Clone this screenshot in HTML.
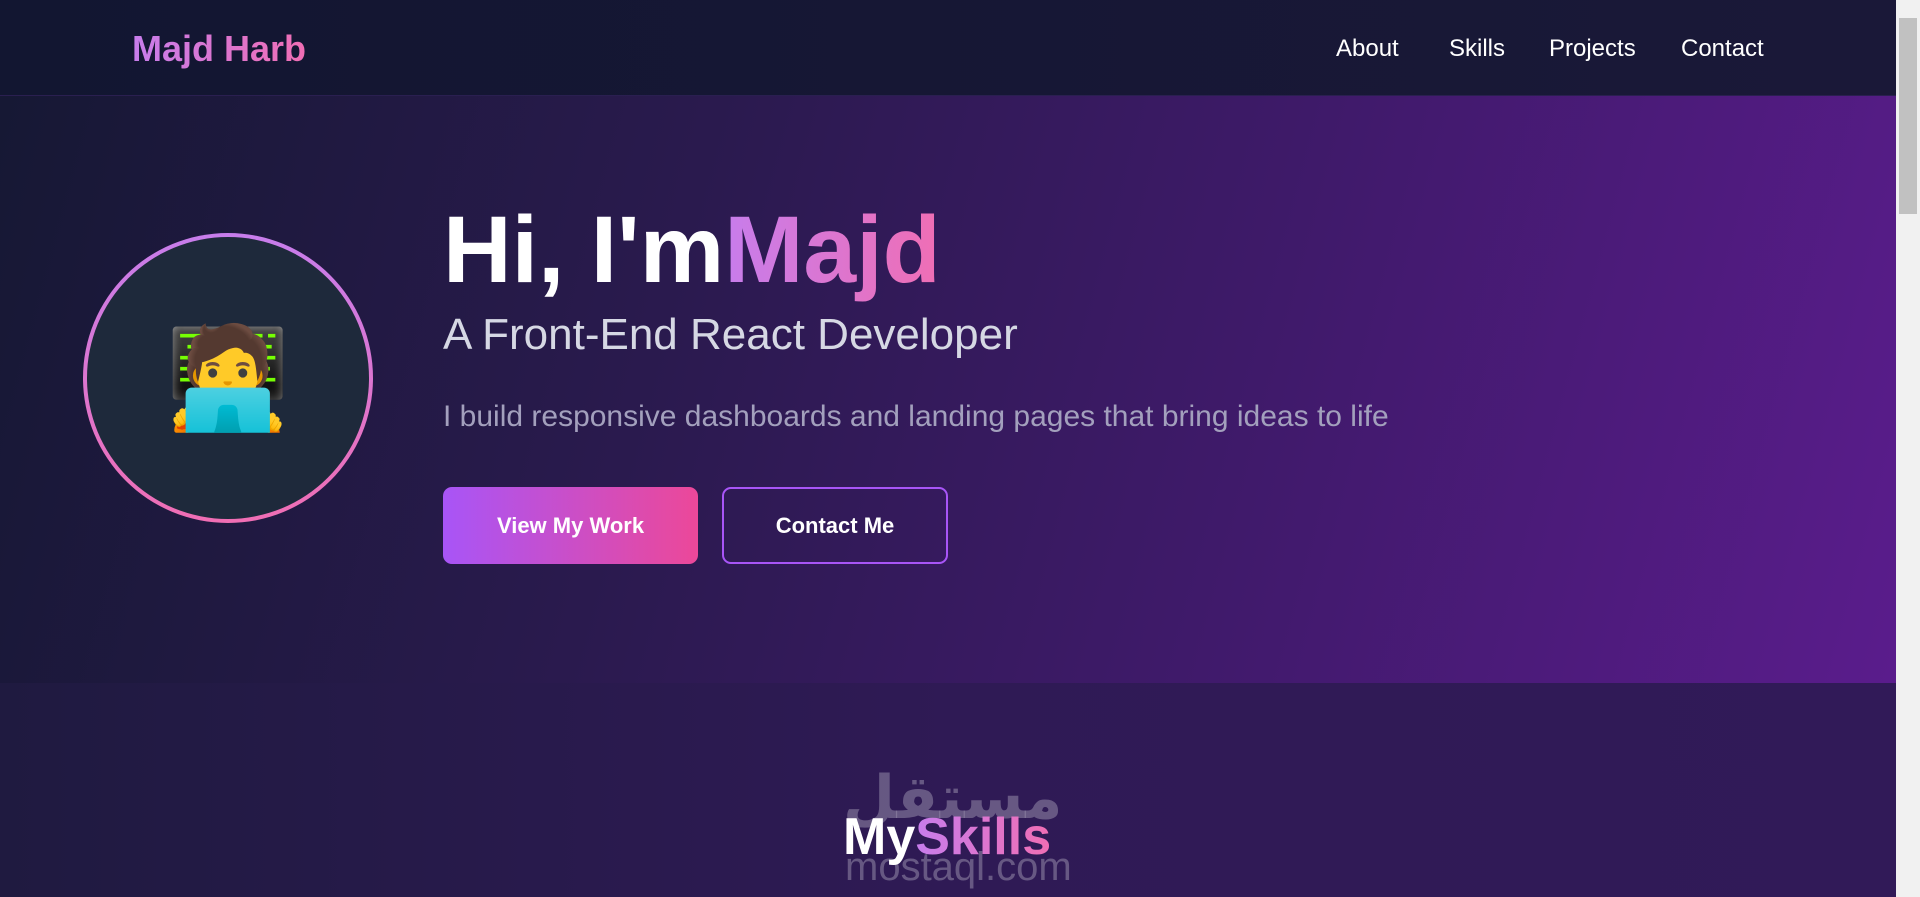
<!DOCTYPE html>
<html><head><meta charset="utf-8"><style>
*{margin:0;padding:0;box-sizing:border-box}
body{width:1920px;height:897px;overflow:hidden;font-family:"Liberation Sans",sans-serif;background:#1a1838;position:relative}
.main{position:absolute;left:0;top:0;width:1896px;height:897px;overflow:hidden}
nav{position:absolute;left:0;top:0;width:1896px;height:96px;background:linear-gradient(90deg,#121631,#1a1838);border-bottom:1px solid #2a1f50;z-index:2}
.logo{position:absolute;left:132px;top:28px;font-size:36px;font-weight:bold;background:linear-gradient(90deg,#c77dec,#f06eb4);-webkit-background-clip:text;color:transparent}
.links{position:absolute;top:35px;font-size:24px;color:#fff}
.links span{position:absolute;white-space:nowrap}
.hero{position:absolute;left:0;top:96px;width:1896px;height:587px;background:linear-gradient(105deg,#161834 0%,#2a1a4e 35%,#3f1a6a 65%,#5a1c8c 100%)}
.circle{position:absolute;left:83px;top:137px;width:290px;height:290px;border-radius:50%;background:linear-gradient(180deg,#c77dec,#f06eb4);padding:4px}
.circle div{width:100%;height:100%;border-radius:50%;background:#1e293b;display:flex;align-items:center;justify-content:center;font-size:100px}
h1{position:absolute;left:443px;top:102px;font-size:95px;font-weight:bold;color:#fff;white-space:nowrap;line-height:1.1}
h1 b{background:linear-gradient(90deg,#c77dec,#f06eb4);-webkit-background-clip:text;color:transparent}
.sub{position:absolute;left:443px;top:214px;font-size:44px;color:#d6d8e4;white-space:nowrap}
.p{position:absolute;left:443px;top:304px;font-size:30px;color:#a3a0bd;white-space:nowrap}
.btn{position:absolute;top:391px;height:77px;border-radius:9px;color:#fff;font-weight:bold;font-size:22px;display:flex;align-items:center;justify-content:center}
.b1{left:443px;width:255px;background:linear-gradient(90deg,#a855f7,#ec4899)}
.b2{left:722px;width:226px;border:2.5px solid #a855f7}
.skills{position:absolute;left:0;top:683px;width:1896px;height:214px;background:linear-gradient(90deg,#1f1a40,#2f1a55 50%,#311a58)}
.wm{position:absolute;left:843px;top:80px;color:rgba(150,140,170,.55);font-size:60px;font-weight:bold;white-space:nowrap;font-family:"DejaVu Sans",sans-serif}
.wm2{position:absolute;left:845px;top:162px;color:rgba(150,140,170,.55);font-size:40px;white-space:nowrap}
h2{position:absolute;left:843px;top:124px;font-size:52px;font-weight:bold;color:#fff;white-space:nowrap}
h2 b{background:linear-gradient(90deg,#c77dec,#f06eb4);-webkit-background-clip:text;color:transparent}
.sb{position:absolute;left:1896px;top:0;width:24px;height:897px;background:#f1f1f1}
.thumb{position:absolute;left:3px;top:18px;width:18px;height:196px;background:#c1c1c1}
</style></head><body>
<div class="main">
<nav><div class="logo">Majd Harb</div>
<div class="links"><span style="left:1336px">About</span><span style="left:1449px">Skills</span><span style="left:1549px">Projects</span><span style="left:1681px">Contact</span></div></nav>
<div class="hero">
<div class="circle"><div>🧑‍💻</div></div>
<h1>Hi, I'm<b>Majd</b></h1>
<div class="sub">A Front-End React Developer</div>
<div class="p">I build responsive dashboards and landing pages that bring ideas to life</div>
<div class="btn b1">View My Work</div>
<div class="btn b2">Contact Me</div>
</div>
<div class="skills">
<div class="wm">مستقل</div>
<div class="wm2">mostaql.com</div>
<h2>My<b>Skills</b></h2>
</div>
</div>
<div class="sb"><div class="thumb"></div></div>
</body></html>
